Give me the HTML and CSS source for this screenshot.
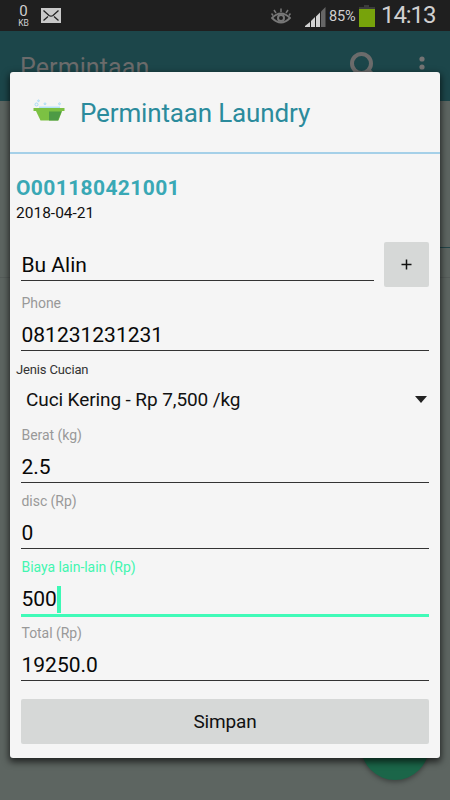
FILE: index.html
```html
<!DOCTYPE html>
<html lang="id">
<head>
<meta charset="utf-8">
<title>Permintaan Laundry</title>
<link rel="stylesheet" href="styles.css">
</head>
<body>
<div class="screen">
  <header class="status">
    <div class="traffic"><span class="traffic-n">0</span><span class="traffic-u">KB</span></div>
    <svg class="mail" width="20" height="15" viewBox="0 0 20 15"><path fill="#c9c9c9" d="M0 0h20v15H0z"/><path d="M2.500 2.500 8 7.500q2 1.300 4 0l5.500-5M2.500 12.500 7 8.500m10.500 4L13 8.500" fill="none" stroke="#222" stroke-width="1.300"/></svg>
    <svg class="eye" width="20" height="17" viewBox="0 0 20 17" fill="none" stroke="#777"><path stroke-width="1.800" d="M1 10q9-9 18 0-9 9-18 0z"/><circle cx="10" cy="10" r="3" stroke-width="2"/><path stroke-width="1.500" d="M10 4V.5M5 5 3 2m12 3 2-3M2 7.500.5 5.500M18 7.500l1.500-2"/></svg>
    <svg class="signal" width="21" height="20" viewBox="0 0 21 20"><path fill="#d2d2d2" d="M0 20v-1l5-4v5zM6 20v-6l4-4v10zM11 20V9.500l4-4V20z"/><path fill="#666" d="M16 20V4.500L20.500 0v20z"/></svg>
    <span class="percent">85%</span>
    <svg class="battery" width="16" height="22" viewBox="0 0 16 22"><path fill="#3c3c3c" d="M5 0h5v2h6v3H0V2h5z"/><path fill="#77a30b" d="M0 4h16v18H0z"/></svg>
    <span class="clock">14:13</span>
  </header>
  <div class="appbar">
    <span class="appbar-title">Permintaan</span>
    <svg class="search" width="28" height="28" viewBox="0 0 28 28" fill="none" stroke="#6b6b6b"><circle cx="11.500" cy="11.500" r="9.500" stroke-width="4"/><path d="m18 18 8 8" stroke-width="4.500"/></svg>
    <svg class="more" width="6" height="22" viewBox="0 0 6 22" fill="#747474"><circle cx="3" cy="3" r="2.600"/><circle cx="3" cy="11" r="2.600"/><circle cx="3" cy="19" r="2.600"/></svg>
  </div>
  <div class="backdrop"><div class="back-line"></div><div class="back-row"></div></div>
  <div class="fab"></div>

  <main class="dialog">
    <div class="dialog-head">
      <svg class="tub" width="32" height="22" viewBox="0 0 32 22"><path fill="#b5e3fa" d="M6 7.500h21V9H6z"/><g fill="none" stroke="#a5dcf7"><circle cx="3.500" cy="5.500" r="1.500"/><circle cx="5.500" cy="1.800" r=".8"/><circle cx="12" cy="4.800" r=".9"/><circle cx="26.500" cy="4.800" r=".9"/></g><path fill="#7cc143" d="M2.500 11h27l-4 10.500h-18z"/><path fill="#4d9a45" d="M16 12.500h12.500l-3.500 9h-9z"/><path fill="#7cc143" d="M.5 9h31v3H.5z"/></svg>
      <h1 class="title">Permintaan Laundry</h1>
    </div>
    <div class="order"><div class="code">O001180421001</div><div class="date">2018-04-21</div></div>
    <div class="customer">
      <div class="value name"><span>Bu Alin</span></div>
      <button class="plus" aria-label="Tambah"><svg width="11" height="11" viewBox="0 0 11 11"><path d="M5.500.5v10M.5 5.500h10" stroke="#111" stroke-width="1.500"/></svg></button>
    </div>
    <div class="field"><div class="label">Phone</div><div class="value"><span>081231231231</span></div></div>
    <div class="kind">
      <div class="kind-label">Jenis Cucian</div>
      <div class="select"><span>Cuci Kering - Rp 7,500 /kg</span><svg width="12" height="7" viewBox="0 0 12 7"><path fill="#222" d="M0 0h12L6 7z"/></svg></div>
    </div>
    <div class="field"><div class="label">Berat (kg)</div><div class="value"><span>2.5</span></div></div>
    <div class="field"><div class="label">disc (Rp)</div><div class="value"><span>0</span></div></div>
    <div class="field active"><div class="label">Biaya lain-lain (Rp)</div><div class="value"><span>500</span><i class="caret"></i></div></div>
    <div class="field"><div class="label">Total (Rp)</div><div class="value"><span>19250.0</span></div></div>
    <button class="save">Simpan</button>
  </main>
</div>
</body>
</html>
```
FILE: styles.css
```css
* { box-sizing: border-box; }
body { margin: 0; font-family: Roboto, "Liberation Sans", sans-serif; color: #111; }
button { font: inherit; color: inherit; border: 0; padding: 0; }
svg { display: block; flex: none; }
.screen { position: relative; width: 450px; height: 800px; overflow: hidden; background: #5d6561; }

.status { height: 31px; background: #1f1f1f; display: flex; align-items: flex-start; color: #d0d0d0; white-space: nowrap; }
.traffic { width: 13px; margin: 4px 11px 0 17px; display: flex; flex-direction: column; align-items: center; }
.traffic-n { font-size: 15px; line-height: 15px; }
.traffic-u { font-size: 8.5px; line-height: 9px; }
.mail { margin-top: 8px; }
.eye { margin: 8px 0 0 210px; }
.signal { margin: 7px 0 0 14px; }
.percent { width: 28px; margin: 8px 0 0 3px; font-size: 14.5px; line-height: 17px; letter-spacing: -.2px; }
.battery { margin: 5px 0 0 2px; }
.clock { margin: 2px 0 0 6px; font-size: 24px; line-height: 27px; letter-spacing: -1.1px; }

.appbar { height: 70px; background: #1c464a; display: flex; align-items: flex-start; }
.appbar-title { width: 130px; margin: 22px 0 0 20px; font-size: 25px; line-height: 30px; color: #6b6b6b; letter-spacing: .1px; }
.search { margin: 21px 0 0 200px; }
.more { margin: 25px 0 0 41px; }
.backdrop { padding-top: 146px; }
.back-line { height: 1px; margin-left: 436px; background: #23464a; }
.back-row { height: 30px; border-bottom: 1px solid #555c59; }
.fab { position: absolute; left: 361px; top: 712px; width: 68px; height: 68px; border-radius: 50%; background: #1b6649; box-shadow: 0 2px 5px rgba(0,0,0,.35); }

.dialog { position: absolute; left: 10px; top: 72px; width: 430px; height: 686px; background: #f5f5f5; border-radius: 3px; box-shadow: 0 3px 7px 1px rgba(0,0,0,.65); }
.dialog-head { height: 82px; display: flex; align-items: flex-start; border-bottom: 2px solid #a5d0e8; }
.tub { margin: 27px 0 0 23px; }
.title { margin: 25px 0 0 15px; font-size: 26px; line-height: 32px; font-weight: 400; letter-spacing: -.15px; color: #2b8b9c; white-space: nowrap; }
.order { height: 88px; padding: 21px 0 0 6px; }
.code { font-size: 21px; line-height: 26px; font-weight: 700; color: #39a8b5; letter-spacing: .38px; }
.date { font-size: 15.5px; line-height: 24px; }
.customer { height: 44px; display: flex; gap: 10px; padding: 0 11px; }
.value { display: flex; align-items: flex-start; height: 33px; padding: 5px 0 0 .5px; border-bottom: 1px solid #333; font-size: 21px; line-height: 25px; color: #080808; }
.name { width: 353px; height: 39px; padding-top: 11px; }
.plus { width: 45px; height: 45px; border-radius: 2px; background: #d6d8d7; display: flex; align-items: center; justify-content: center; }
.field { height: 66px; padding: 7px 11px 0; }
.label { height: 25px; padding-left: .5px; font-size: 14px; line-height: 20px; letter-spacing: -.05px; color: #999; }
.active .label { color: #43f5b0; }
.active .value { height: 35px; border-bottom: 3px solid #40fbb8; }
.caret { width: 4px; height: 27px; margin-top: -1px; background: #3cf9b5; }
.kind { height: 66px; padding: 8px 13px 0 6px; }
.kind-label { height: 20px; font-size: 13px; line-height: 20px; letter-spacing: -.15px; color: #333; }
.select { height: 38px; display: flex; align-items: center; justify-content: space-between; padding-left: 10px; font-size: 19px; letter-spacing: -.1px; }
.save { display: block; width: 408px; height: 45px; margin: 17px 0 0 11px; border-radius: 2px; background: #d6d8d7; font-size: 19px; letter-spacing: -.15px; }
```
